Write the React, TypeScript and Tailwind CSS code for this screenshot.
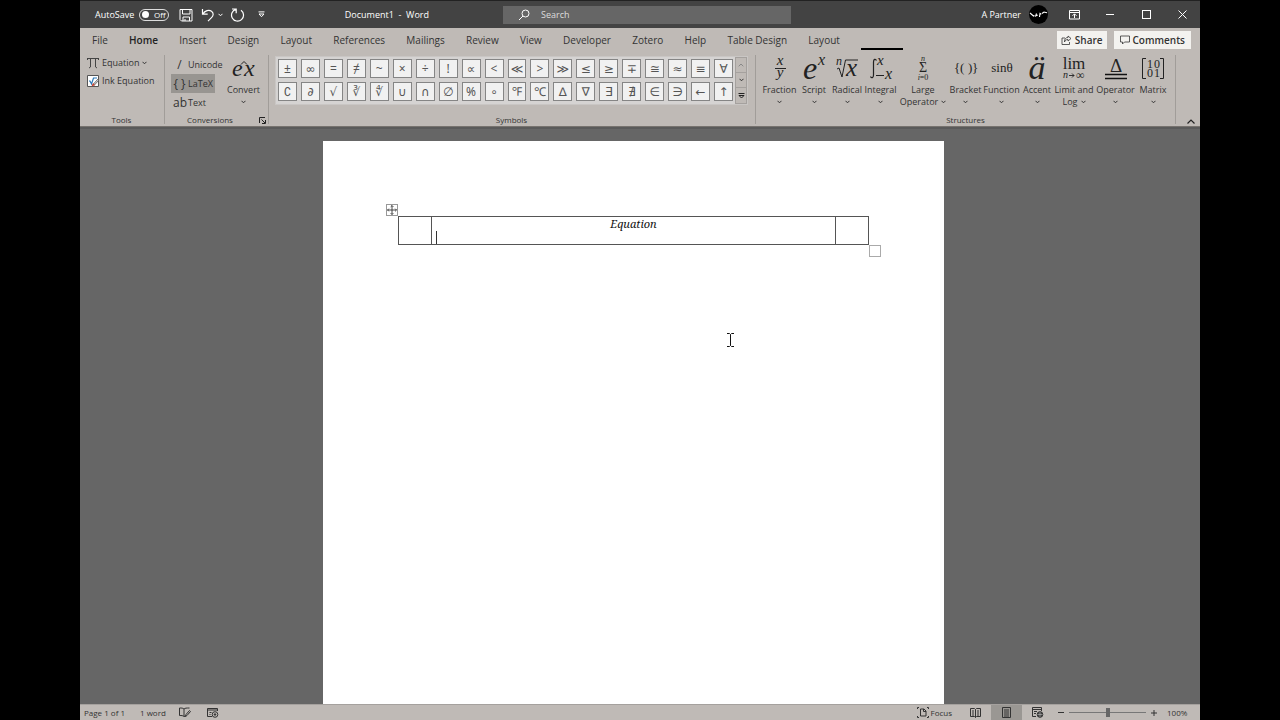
import React, { useState } from "react";

const TABS = [
  "File",
  "Home",
  "Insert",
  "Design",
  "Layout",
  "References",
  "Mailings",
  "Review",
  "View",
  "Developer",
  "Zotero",
  "Help",
  "Table Design",
  "Layout",
];

const SYMBOLS = [
  "±", "∞", "=", "≠", "~", "×", "÷", "!", "∝", "<", "≪", ">", "≫", "≤", "≥", "∓", "≅", "≈", "≡", "∀",
  "∁", "∂", "√", "∛", "∜", "∪", "∩", "∅", "%", "∘", "℉", "℃", "∆", "∇", "∃", "∄", "∈", "∋", "←", "↑",
];

const Chevron = () => (
  <svg width="5" height="4" viewBox="0 0 5 4" fill="none" stroke="currentColor" className="shrink-0">
    <path d="M0.5 0.8 2.5 2.8 4.5 0.8" />
  </svg>
);

// Serif glyph drawings used on the large ribbon buttons
const Art = ({ children }: { children: React.ReactNode }) => (
  <svg
    width="32"
    height="28"
    viewBox="0 0 32 28"
    fill="#222"
    stroke="none"
    className="shrink-0 overflow-visible font-['Liberation_Serif',serif]"
  >
    {children}
  </svg>
);

const STRUCTURES = [
  {
    label: ["Fraction"],
    width: "w-[35px]",
    art: (
      <Art>
        <text x="16" y="10" fontSize="15" fontStyle="italic" textAnchor="middle">x</text>
        <path d="M11 13.500h11" stroke="#222" />
        <text x="16" y="22" fontSize="15" fontStyle="italic" textAnchor="middle">y</text>
      </Art>
    ),
  },
  {
    label: ["Script"],
    width: "w-[34px]",
    art: (
      <Art>
        <text x="5" y="24" fontSize="32" fontStyle="italic">e</text>
        <text x="20" y="10" fontSize="16" fontStyle="italic">x</text>
      </Art>
    ),
  },
  {
    label: ["Radical"],
    width: "w-[32px]",
    art: (
      <Art>
        <text x="5" y="10" fontSize="12" fontStyle="italic">n</text>
        <path d="M6 14l2-1 3 9 3.500-17H27" stroke="#222" fill="none" />
        <text x="15" y="21" fontSize="25" fontStyle="italic">x</text>
      </Art>
    ),
  },
  {
    label: ["Integral"],
    width: "w-[35px]",
    art: (
      <Art>
        <path d="M11.500 5.500C10.500 3.500 8.500 4 8.500 7v13c0 3-2 3.500-3 1.500" stroke="#222" fill="none" strokeWidth="1.200" />
        <text x="12" y="10" fontSize="15" fontStyle="italic">x</text>
        <path d="M11 20.500h8" stroke="#222" />
        <text x="20" y="24" fontSize="16" fontStyle="italic">x</text>
      </Art>
    ),
  },
  {
    label: ["Large", "Operator"],
    width: "w-[50px]",
    art: (
      <Art>
        <text x="16" y="6" fontSize="8" fontStyle="italic" textAnchor="middle">n</text>
        <text x="16" y="17" fontSize="14" textAnchor="middle">Σ</text>
        <text x="16" y="25" fontSize="8" textAnchor="middle">
          <tspan fontStyle="italic">i</tspan>=0
        </text>
      </Art>
    ),
  },
  {
    label: ["Bracket"],
    width: "w-[35px]",
    art: (
      <Art>
        <text x="4" y="17" fontSize="13">{"{"}</text>
        <text x="10" y="17" fontSize="13">(</text>
        <text x="18" y="17" fontSize="13">)</text>
        <text x="22" y="17" fontSize="13">{"}"}</text>
      </Art>
    ),
  },
  {
    label: ["Function"],
    width: "w-[37px]",
    art: (
      <Art>
        <text x="16" y="17" fontSize="13" textAnchor="middle">sinθ</text>
      </Art>
    ),
  },
  {
    label: ["Accent"],
    width: "w-[34px]",
    art: (
      <Art>
        <text x="16" y="24" fontSize="34" fontStyle="italic" textAnchor="middle">ä</text>
      </Art>
    ),
  },
  {
    label: ["Limit and", "Log"],
    width: "w-[40px]",
    art: (
      <Art>
        <text x="16" y="14" fontSize="17" textAnchor="middle">lim</text>
        <text x="5" y="23" fontSize="10" fontStyle="italic">n</text>
        <path d="M11 20.500h5M14 18.500l2 2-2 2" stroke="#222" fill="none" strokeWidth="0.900" />
        <text x="18" y="24" fontSize="12">∞</text>
      </Art>
    ),
  },
  {
    label: ["Operator"],
    width: "w-[43px]",
    art: (
      <Art>
        <text x="16" y="17" fontSize="19" textAnchor="middle">Δ</text>
        <path d="M5 19.500h22M5 23.500h22" stroke="#111" strokeWidth="1.600" />
      </Art>
    ),
  },
  {
    label: ["Matrix"],
    width: "w-[32px]",
    art: (
      <Art>
        <path d="M9 3.500H5.500v20H9M23 3.500h3.500v20H23" stroke="#222" fill="none" />
        <text x="10" y="13" fontSize="12">1</text>
        <text x="17" y="13" fontSize="12">0</text>
        <text x="10" y="22" fontSize="12">0</text>
        <text x="17" y="22" fontSize="12">1</text>
      </Art>
    ),
  },
];

const TitleBar = () => {
  const [autoSave, setAutoSave] = useState(false);

  return (
    <header className="flex h-7 shrink-0 items-center border-t border-[#222] bg-[#434343] text-[9px] text-white">
      <div className="flex w-[423px] shrink-0 items-center pl-[15px]">
        <label htmlFor="autosave" className="w-11">AutoSave</label>
        <button
          id="autosave"
          type="button"
          role="switch"
          aria-checked={autoSave}
          onClick={() => setAutoSave(!autoSave)}
          className="flex h-3 w-[30px] items-center gap-[5px] rounded-full border border-[#ddd] px-0.5 text-[8px]"
        >
          <span className="size-[7px] rounded-full bg-white" />
          <span>{autoSave ? "On" : "Off"}</span>
        </button>
        <button type="button" aria-label="Save" className="ml-[10px]">
          <svg width="14" height="14" viewBox="0 0 14 14" fill="none" stroke="currentColor">
            <path d="M1 1.500h12v11.500H2.500L1 11.500zM3.500 1.500v4.500h7.500v-4.500M4 13V9h6.500v4M6 13v-2" />
          </svg>
        </button>
        <button type="button" aria-label="Undo" className="ml-2">
          <svg width="14" height="14" viewBox="0 0 14 14" fill="none" stroke="currentColor" strokeWidth="1.200">
            <path d="M1.500 1v5.200h5.200M1.800 6C4 2.500 8 1.500 10.500 3.200c2.600 2 1.800 4.700 0 6.500L7 13.200" />
          </svg>
        </button>
        <button type="button" aria-label="Undo options" className="ml-[3px]">
          <Chevron />
        </button>
        <button type="button" aria-label="Redo" className="ml-[7px]">
          <svg width="15" height="14" viewBox="0 0 15 14" fill="none" stroke="currentColor" strokeWidth="1.200">
            <path d="M2 1h4.200v4.200M6 1.300A6 6 0 1 0 11 2.200" />
          </svg>
        </button>
        <button type="button" aria-label="Customize toolbar" className="ml-[13px]">
          <svg width="7" height="7" viewBox="0 0 7 7" fill="none" stroke="currentColor">
            <path d="M0.500 0.900h6M1 3h5L3.500 5.700z" />
          </svg>
        </button>
        <h1 className="flex-1 pr-[74px] text-right whitespace-pre">Document1  -  Word</h1>
      </div>
      <label className="flex h-[18px] flex-1 items-center gap-[11px] bg-[#666] pl-[15px]">
        <svg width="12" height="12" viewBox="0 0 12 12" fill="none" stroke="currentColor">
          <circle cx="7.500" cy="4.500" r="3.500" />
          <path d="M5 7 1 11" />
        </svg>
        <input
          type="search"
          aria-label="Search"
          placeholder="Search"
          className="min-w-0 flex-1 bg-transparent outline-none placeholder:text-[#ddd]"
        />
      </label>
      <div className="flex w-[409px] shrink-0 items-center justify-end">
        <button type="button" className="flex items-center gap-2">
          A Partner
          <svg width="19" height="19" viewBox="0 0 19 19">
            <circle cx="9.500" cy="9.500" r="9.500" fill="#000" />
            <path d="M1 8l3.500 3 1-.5M7.500 8.500l-.8 2.500 2-1M10.500 12l.5-3.500 1.300.8M13 8.500l2-1.500 3 .8" stroke="#fff" strokeWidth="1.100" fill="none" />
          </svg>
        </button>
        <div className="ml-2 flex">
          <button type="button" aria-label="Ribbon display options" className="flex w-9 justify-center">
            <svg width="11" height="10" viewBox="0 0 11 10" fill="none" stroke="currentColor">
              <path d="M0.500 0.500h10v8.500H0.500zM0.500 2.500h10M5.500 8V4M3.500 5.800l2-2 2 2" />
            </svg>
          </button>
          <button type="button" aria-label="Minimize" className="flex w-9 items-center justify-center">
            <span className="h-px w-2 bg-white" />
          </button>
          <button type="button" aria-label="Maximize" className="flex w-9 items-center justify-center">
            <span className="size-[9px] border border-white" />
          </button>
          <button type="button" aria-label="Close" className="flex w-9 items-center justify-center">
            <svg width="9" height="9" viewBox="0 0 9 9" stroke="currentColor">
              <path d="M0.500 0.500l8 8M8.500 0.500l-8 8" />
            </svg>
          </button>
        </div>
      </div>
    </header>
  );
};

const TabRow = () => (
  <nav className="flex h-6 shrink-0 items-center pr-[9px] pl-3 text-[10px]">
    <div className="flex w-[748px] justify-between">
      {TABS.map((tab, i) => (
        <button key={i} type="button" className={tab === "Home" ? "font-semibold text-[#222]" : ""}>
          {tab}
        </button>
      ))}
    </div>
    <button type="button" aria-label="Equation" className="ml-[21px] h-full w-[42px] pt-[18px]">
      <span className="block h-0.5 bg-black" />
    </button>
    <div className="ml-auto flex gap-[7px] font-semibold text-[#333]">
      <button type="button" className="flex h-[18px] items-center gap-[3px] bg-[#f3f2ef] px-1">
        <svg width="11" height="10" viewBox="0 0 11 10" fill="none" stroke="currentColor" strokeWidth="0.800">
          <path d="M4 3H1v6.500h7.500V7M7 1l3 2.500L7 6V4.500C5 4.500 4 5.500 3.500 7c0-3 1-4.500 3.500-4.500z" />
        </svg>
        Share
      </button>
      <button type="button" className="flex h-[18px] items-center gap-[3px] bg-[#f3f2ef] px-[6px]">
        <svg width="10" height="10" viewBox="0 0 10 10" fill="none" stroke="currentColor" strokeWidth="0.800">
          <path d="M0.500 1h9v6H4.500L2.500 9V7h-2z" />
        </svg>
        Comments
      </button>
    </div>
  </nav>
);

const Group = ({ title, className, children }: { title: string; className: string; children: React.ReactNode }) => (
  <section className={`relative flex flex-col border-r border-[#a19d99] ${className}`}>
    <div className="flex flex-1">{children}</div>
    <h2 className="text-center text-[8px] leading-2">{title}</h2>
  </section>
);

const Ribbon = () => {
  const [format, setFormat] = useState("LaTeX");

  return (
    <div className="flex h-[75px] shrink-0 border-b border-[#77736f] pt-[3px] pb-[2px] text-[9px] leading-3">
      <Group title="Tools" className="w-[85px] pr-2 pl-[7px]">
        <div className="flex flex-col gap-[6px] pt-[2px]">
          <button type="button" className="flex items-center gap-[3px]">
            <svg width="12" height="12" viewBox="0 0 12 12" fill="none" stroke="#444">
              <path d="M0.500 1.500h11M3.500 1.500v8.500l-1.500 1M8.500 1.500v8.500l1.500 1M0.500 1v2M11.500 1v2" />
            </svg>
            Equation
            <Chevron />
          </button>
          <button type="button" className="flex items-center gap-[3px] whitespace-nowrap">
            <svg width="12" height="12" viewBox="0 0 12 12" fill="none">
              <path d="M0.500 0.500h11v11H0.500z" fill="#fff" stroke="#555" />
              <path d="M2 6l1 0 1.500 3L6.500 3H10" stroke="#2877b8" strokeWidth="1.200" />
              <path d="M6 9.500l5-5.500 1 1-5 5.500z" fill="#d9d9d9" stroke="#555" strokeWidth="0.800" />
              <path d="M4.500 11.500l1.500-3.500 2 2z" fill="#c8412f" />
            </svg>
            Ink Equation
          </button>
        </div>
      </Group>
      <Group title="Conversions" className="w-[104px] pr-[19px] pl-[6px]">
        <div className="flex w-14 shrink-0 flex-col">
          {[
            ["Unicode", "/"],
            ["LaTeX", "{ }"],
            ["Text", "ab"],
          ].map(([name, glyph]) => (
            <button
              key={name}
              type="button"
              aria-pressed={format === name}
              onClick={() => setFormat(name)}
              className={`flex h-[19px] w-11 items-center gap-[2px] pl-[2px] ${format === name ? "bg-[#989591]" : ""}`}
            >
              <span className="w-[13px] shrink-0 text-center text-xs leading-3 whitespace-nowrap">{glyph}</span>
              {name}
            </button>
          ))}
        </div>
        <button type="button" className="flex shrink-0 flex-col items-center">
          <Art>
            <text x="4" y="21" fontSize="24" fontStyle="italic">e</text>
            <text x="16" y="21" fontSize="24" fontStyle="italic">x</text>
            <path d="M13 9.500l3-3 3 3" stroke="#222" fill="none" />
          </Art>
          <span className="mt-px">Convert</span>
          <span className="flex h-3 items-center"><Chevron /></span>
        </button>
        <button type="button" aria-label="Conversion options" className="absolute right-[2px] bottom-0">
          <svg width="7" height="7" viewBox="0 0 7 7" fill="none" stroke="#222">
            <path d="M0.500 6V0.500H6M2.500 2.500l3.500 3.500M6.500 3v3.500H3" />
          </svg>
        </button>
      </Group>
      <Group title="Symbols" className="flex-1 pr-[7px] pl-[6px]">
        <div className="mt-px flex h-[49px] flex-1 border border-[#c9c6c4] bg-[#d5d3d2]">
          <div className="grid flex-1 grid-cols-20 content-start gap-1 p-[2px]">
            {SYMBOLS.map((s) => (
              <button
                key={s}
                type="button"
                className="flex h-[19px] items-center justify-center border border-[#858585] bg-[#f1f1f1] font-['Noto_Sans','DejaVu_Sans',sans-serif] text-xs text-[#555]"
              >
                {s}
              </button>
            ))}
          </div>
          <div className="grid w-3 grid-rows-3 divide-y divide-[#a5a19e] border border-[#a5a19e] bg-[#bfbab6]">
            <button type="button" aria-label="Scroll up" className="flex items-center justify-center text-[#888]">
              <svg width="6" height="4" viewBox="0 0 6 4" fill="none" stroke="currentColor">
                <path d="M0.700 3.300 3 1l2.300 2.300" />
              </svg>
            </button>
            <button type="button" aria-label="Scroll down" className="flex items-center justify-center">
              <Chevron />
            </button>
            <button type="button" aria-label="More symbols" className="flex items-center justify-center">
              <svg width="7" height="6" viewBox="0 0 7 6" fill="none" stroke="#222">
                <path d="M0.500 0.500h6M1 2.500h5L3.500 5z" />
              </svg>
            </button>
          </div>
        </div>
      </Group>
      <Group title="Structures" className="w-[420px] pr-[6px] pl-[6px]">
        {STRUCTURES.map(({ label, width, art }) => (
          <button key={label.join(" ")} type="button" className={`flex shrink-0 flex-col items-center ${width}`}>
            {art}
            <span className="mt-px whitespace-nowrap">{label[0]}</span>
            <span className="flex h-3 items-center gap-[3px]">
              {label[1]}
              <Chevron />
            </span>
          </button>
        ))}
      </Group>
      <button type="button" aria-label="Collapse ribbon" className="flex w-6 shrink-0 items-end justify-center pl-[6px]">
        <svg width="8" height="5" viewBox="0 0 8 5" fill="none" stroke="#222" strokeWidth="1.200">
          <path d="M0.500 4.500 4 1l3.500 3.500" />
        </svg>
      </button>
    </div>
  );
};

const Document = () => (
  <main className="relative flex min-h-0 flex-1 justify-center border-t-2 border-[#5a5a5a] bg-[#666] pt-3 pr-[13px]">
    <article className="w-[621px] bg-white px-[75px] pt-[75px]">
      <div className="relative">
        <table className="w-full table-fixed border-collapse font-['Noto_Serif','Liberation_Serif',serif] text-[11px] leading-[14px] text-[#111]">
          <tbody>
            <tr className="h-7">
              <td className="w-[33px] border border-[#555]" />
              <td className="border border-[#555] p-0 text-center align-top">
                <i className="block">Equation</i>
                <span className="ml-1 block h-[13px] w-px bg-[#333]" />
              </td>
              <td className="w-[33px] border border-[#555]" />
            </tr>
          </tbody>
        </table>
        <button
          type="button"
          aria-label="Move table"
          className="absolute -top-3 -left-3 border border-[#999] bg-white"
        >
          <svg width="10" height="10" viewBox="0 0 10 10" fill="none" stroke="#333" strokeWidth="0.900">
            <path d="M5 0.500v9M0.500 5h9M3.700 1.800 5 0.500l1.300 1.300M3.700 8.200 5 9.500l1.300-1.300M1.800 3.700 0.500 5l1.300 1.300M8.200 3.700 9.500 5 8.200 6.300" />
          </svg>
        </button>
        <button
          type="button"
          aria-label="Resize table"
          className="absolute -right-3 -bottom-3 size-3 border border-[#aaa] bg-white"
        />
      </div>
    </article>
    <svg width="9" height="14" viewBox="0 0 9 14" fill="none" stroke="#111" className="absolute top-[204px] left-[646px]">
      <path d="M1 0.500h2.500l1 1 1-1H8M4.500 1.500v11M1 13.500h2.500l1-1 1 1H8" />
    </svg>
  </main>
);

const StatusBar = () => {
  const [zoom, setZoom] = useState(100);

  return (
    <footer className="flex h-4 shrink-0 items-center border-t border-[#a5a19e] pl-1 text-[8px]">
      <span>Page 1 of 1</span>
      <span className="ml-[15px]">1 word</span>
      <button type="button" aria-label="Proofing" className="ml-[13px]">
        <svg width="12" height="11" viewBox="0 0 12 11" fill="none" stroke="#333">
          <path d="M5 9.500V2C4 1 2.500 1 0.500 1v7.500c2 0 3.500 0 4.500 1 1 0 1.500-.5 2-.8M5 2c1-1 2.500-1 5.500-1M6.500 9.500l.5-2L10.500 3.500l1 1L8 8.500z" />
        </svg>
      </button>
      <button type="button" aria-label="Macro recording" className="ml-4">
        <svg width="12" height="11" viewBox="0 0 12 11" fill="none" stroke="#333">
          <path d="M5 9.500H0.500v-8h10V4M0.500 3h10M2.500 5.500h2M2.500 7.500h1" />
          <circle cx="8" cy="7.500" r="2.800" />
          <circle cx="8" cy="7.500" r="0.800" fill="#333" />
        </svg>
      </button>
      <button type="button" className="ml-auto flex items-center gap-0.5">
        <svg width="12" height="11" viewBox="0 0 12 11" fill="none" stroke="#333">
          <path d="M2 0.500H0.500V2M10 0.500h1.500V2M2 10.500H0.500V9M10 10.500h1.500V9M3.500 2H7l2 2v5H3.500zM6.500 2v2.500H9" />
        </svg>
        Focus
      </button>
      <div className="ml-2 flex h-full">
        <button type="button" aria-label="Read mode" className="flex w-[31px] items-center justify-center">
          <svg width="11" height="10" viewBox="0 0 11 10" fill="none" stroke="#333">
            <path d="M0.500 0.500h4l1 1 1-1h4v8h-4l-1 1-1-1h-4zM5.500 1.500v8M2 3h2M2 5h2M2 7h2M7 3h2M7 5h2M7 7h2" />
          </svg>
        </button>
        <button type="button" aria-label="Print layout" aria-pressed="true" className="flex w-[31px] items-center justify-center bg-[#9a9793]">
          <svg width="9" height="11" viewBox="0 0 9 11" fill="none" stroke="#333">
            <path d="M0.500 0.500h8v10h-8zM2 3h5M2 5h5M2 7h5M2 9h5" />
          </svg>
        </button>
        <button type="button" aria-label="Web layout" className="flex w-[31px] items-center justify-center">
          <svg width="12" height="11" viewBox="0 0 12 11" fill="none" stroke="#333">
            <path d="M4 9.500H0.500v-9h9V4M0.500 2.500h9M2 4.500h3M2 6.500h2" />
            <circle cx="8" cy="7.500" r="2.800" fill="#444" />
            <path d="M5.500 7.500h5M8 5v5" stroke="#bbb" strokeWidth="0.600" />
          </svg>
        </button>
      </div>
      <button type="button" aria-label="Zoom out" className="ml-[5px] flex h-3 w-[6px] items-center">
        <span className="h-px w-full bg-[#333]" />
      </button>
      <input
        type="range"
        aria-label="Zoom"
        min={10}
        max={190}
        value={zoom}
        onChange={(e) => setZoom(Number(e.target.value))}
        className="mx-[5px] h-3 w-[77px] appearance-none bg-[linear-gradient(#777,#777)] bg-[length:100%_1px] bg-center bg-no-repeat [&::-webkit-slider-thumb]:h-[9px] [&::-webkit-slider-thumb]:w-1 [&::-webkit-slider-thumb]:appearance-none [&::-webkit-slider-thumb]:bg-[#666]"
      />
      <button type="button" aria-label="Zoom in">
        <svg width="6" height="6" viewBox="0 0 6 6" stroke="#333">
          <path d="M0 3h6M3 0v6" />
        </svg>
      </button>
      <span className="w-[43px] pl-[10px]">{zoom}%</span>
    </footer>
  );
};

export default function App() {
  return (
    <div className="h-screen bg-black px-20">
      <div className="flex h-full flex-col overflow-hidden bg-[#bfbab6] font-['Open_Sans',sans-serif] text-[#333]">
        <TitleBar />
        <TabRow />
        <Ribbon />
        <Document />
        <StatusBar />
      </div>
    </div>
  );
}
